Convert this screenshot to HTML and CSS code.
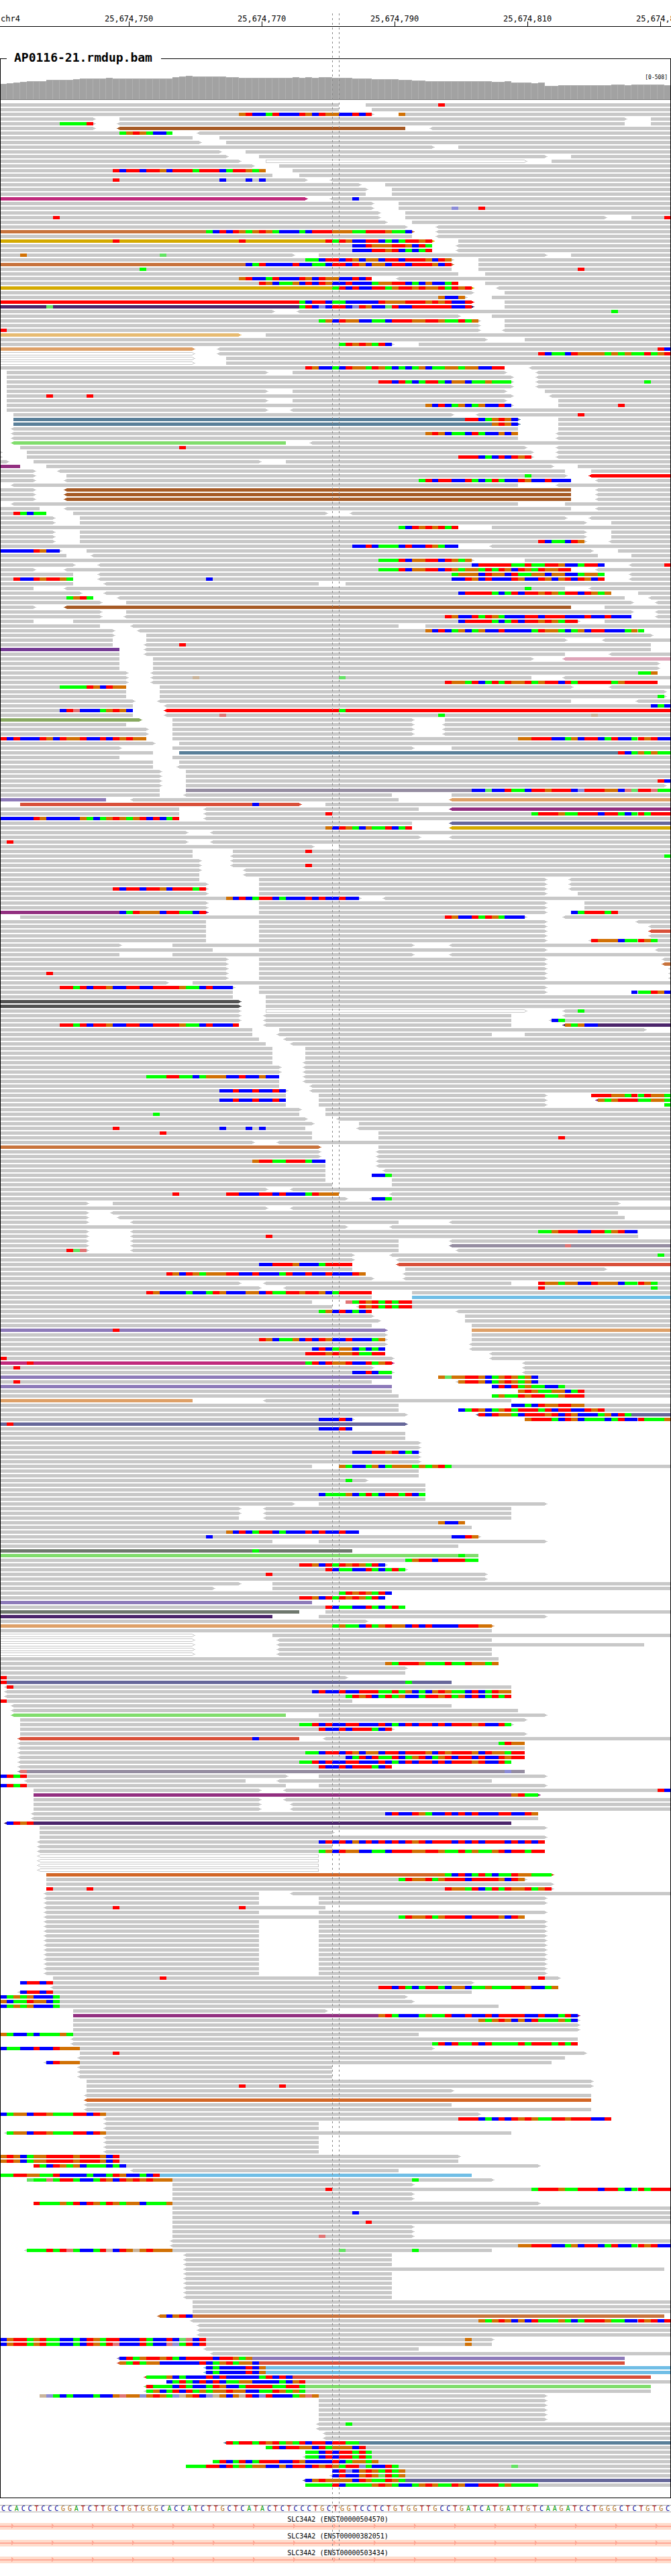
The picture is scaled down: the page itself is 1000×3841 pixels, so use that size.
FILE: index.html
```html
<!DOCTYPE html>
<html lang="en">
<head>
<meta charset="utf-8">
<meta name="viewport" content="width=device-width, initial-scale=1">
<title>AP0116-21.rmdup.bam</title>
<link rel="stylesheet" href="styles.css">
</head>
<body>
<main class="browser">
  <svg class="plot ruler" id="ruler" role="img" aria-label="Position on chr4"></svg>

  <section class="track">
    <h1 class="track-title">AP0116-21.rmdup.bam</h1>
    <svg class="plot coverage" id="coverage" role="img" aria-label="Coverage"></svg>
    <svg class="plot reads" id="reads" role="img" aria-label="Aligned reads"></svg>
  </section>

  <div class="sequence" id="sequence"></div>

  <section class="genes">
    <h2 class="gene-name">SLC34A2 (ENST00000504570)</h2>
    <svg class="plot gene-body" aria-hidden="true">
      <defs>
        <pattern id="strand" x="17" y="0" width="60" height="10" patternUnits="userSpaceOnUse">
          <path class="strand-mark" d="M0 1L3 4V6L0 8Z"/>
        </pattern>
      </defs>
      <rect class="intron" y="4" width="100%" height="2"/>
      <rect fill="url(#strand)" width="100%" height="10"/>
    </svg>
    <h2 class="gene-name">SLC34A2 (ENST00000382051)</h2>
    <svg class="plot gene-body" aria-hidden="true">
      <rect class="intron" y="4" width="100%" height="2"/>
      <rect fill="url(#strand)" width="100%" height="10"/>
    </svg>
    <h2 class="gene-name">SLC34A2 (ENST00000503434)</h2>
    <svg class="plot gene-body" aria-hidden="true">
      <rect class="intron" y="4" width="100%" height="2"/>
      <rect fill="url(#strand)" width="100%" height="10"/>
    </svg>
  </section>

  <div class="guide guide-start"></div>
  <div class="guide guide-end"></div>
</main>
<script src="browser.js"></script>
</body>
</html>
```
FILE: styles.css
```css
body {
  margin: 0;
  background: #fff;
  color: #000;
  font-family: "DejaVu Sans Mono", monospace;
}

.browser {
  position: relative;
  padding-bottom: 19px;
  overflow: hidden;
}

.plot {
  display: block;
  width: 100%;
  shape-rendering: crispEdges;
}

.ruler {
  height: 40px;
  margin-bottom: 47px;
  font-size: 12px;
}

.track {
  display: flow-root;
  position: relative;
  padding-bottom: 15px;
}

.track::after {
  content: "";
  position: absolute;
  inset: 0;
  border: 1px solid #000;
  pointer-events: none;
}

.track-title {
  position: relative;
  z-index: 1;
  width: 219px;
  margin: -11px 0 0 10px;
  padding-left: 11px;
  background: #fff;
  font-size: 18px;
  line-height: 20px;
  white-space: nowrap;
}

.coverage {
  height: 53px;
  font-size: 8px;
}

.depth-edge { fill: #b0b0b0; }
.depth { fill: #a2a2a2; }
.baseline { fill: #787878; }

.reads {
  margin-top: 5px;
}

.sequence {
  display: grid;
  grid-template-columns: repeat(101, 1fr);
  margin-top: 10px;
  border: solid #aaa;
  border-width: 1px 0;
  font-size: 10px;
  line-height: 9px;
  text-align: center;
}

.base-A { color: #009900; }
.base-C { color: #000099; }
.base-G { color: #b06a10; }
.base-T { color: #aa0000; }

.genes {
  padding-top: 1px;
}

.gene-name {
  margin: 0;
  padding: 5px 0 0 7px;
  font-size: 10px;
  font-weight: 400;
  line-height: 10px;
  text-align: center;
}

.gene-body {
  height: 10px;
  background: #ffdccc;
}

.intron,
.strand-mark {
  fill: #ffa896;
}

.guide {
  position: absolute;
  z-index: 2;
  top: 20px;
  bottom: 24px;
  width: 1px;
  background: repeating-linear-gradient(#888 0 3px, transparent 3px 7px);
}

.guide-start { left: calc(100% * 50 / 101); }
.guide-end { left: calc(100% * 51 / 101); }
```
FILE: browser.js
```js
const COLUMNS = 101;
const ROW_HEIGHT = 7;
const READ_HEIGHT = 5;
const pct = n => (n * 100 / COLUMNS).toFixed(3) + '%';

/* Bases; lower case marks a low-quality call. */
const BASES = {
  A: '#00ff00', C: '#0000ff', G: '#d17105', T: '#ff0000',
  a: '#64e364', c: '#8c8cd8', g: '#c9b49b', t: '#e07575'
};

/* Colour of the mate's chromosome; plain reads are grey. */
const MATES = {
  br: '#a65a25', mg: '#c02a7c', si: '#c8733c', go: '#d4aa00', rd: '#ff0000',
  dp: '#4b256b', tn: '#e7bb71', or: '#dea067', st: '#597f99', gn: '#80dd6c',
  pu: '#922f80', pk: '#dea4b8', vi: '#743b94', ol: '#88a960', mv: '#958da1',
  lv: '#8d7ab9', ru: '#d9503a', sl: '#66679a', ch: '#525252', sk: '#70bee6',
  gg: '#6e776d', ob: '#d26626'
};

const SEQUENCE = 'CCACCTCCCGGATCTTGCTGTGGGCACCATCTTGCTCATACTCTCCCTGCTGGTCCTCTGTGGTTGCCTGATCATGATTGTCAAGATCCTGGGCTCTGTGC';

/* Bar height and the number of columns that share it. */
const DEPTH = [
  [23, 1], [24, 1], [25, 1], [26, 1], [27, 3], [29, 4], [30, 1], [31, 4], [32, 1],
  [31, 9], [33, 1], [34, 1], [35, 1], [34, 5], [33, 2], [32, 8], [33, 1], [32, 1],
  [33, 1], [32, 1], [33, 2], [32, 3], [31, 3], [30, 4], [29, 2], [28, 2], [27, 10],
  [26, 2], [27, 1], [25, 3], [24, 1], [25, 1], [20, 2], [21, 8], [22, 2], [21, 1],
  [22, 5], [21, 1]
];

/* One line per row: reads as start-end (< or > for the strand tip, :mate),
   mismatches as start column and bases, *n to repeat the row. */
const READS = `
0-51 55-101 66T
0-51 56-101
0-56> 60-101 36GTCCATCCCTGCTGGCCTCT 60G
0-14> 18-94> 98-101
0-14> <18-94 98-101 9AAAAT
0-14> <18-61:br <65-101
0-26 <30-101 18AGTGACCA
0-29 33-101
0-30> 34-101
0-65> 69-101
0-33> 37-101
0-34> 39-82> 86-101
0-36> 40-79>:wh 83-101
0-38> 42-101
0-40 44-101 17TCTTCTTGCTTTATTTCATTGAG
0-41 45-101
0-46> <50-101 17T 33C 37C 39C
0-54> 58-101
0-55> 59-101
0-55 59-101
0-46>:mg <50-101 53C
0-56> 60-101
0-56> 60-101 68c 72T
0-57> 61-101
0-57> 61-91> 95-101 8T 100T
0-58> 62-101
0-61> <66-101
0-62>:si <66-101 31ACTCTGAGTGACCCACTTTGGGAATTTGAAC
0-62 <66-101
0-65>:go 69-101 17T 36T 49TATGCCTTCACATTGT
0-65 <69-101 53CCTGGGTTGCTA
0-65 <69-101 53CCCTTGTCACAT
0-44> 48-82> 86-101 3G 24a
0-68> 72-101 46AACTTCTGCGGCTTCTTTGCTG
0-68>:si 72-101 37CATCCCCTCCAACTTCTGCGGCTTCTTTGCT
0-68 72-101 21A 87T
0-69 73-101
0-56 <60-101 36GTCCATCCCTGCTGGCCTCT
0-69 73-101 39TGCAAGCTCTGCCTCCCAGGTTCACGCCAT
0-71>:go <75-101 50ATCTCCTTAGTTGTGGTATGT
0-71> 76-101
0-70> 74-101 66GCCG
0-71>:rd 76-101 45ACTTCAACCCCCTGGGTTTGTGTCCT
0-71>:dp 76-101 7a 45ATCcCTTCcTGCCaTCCTTTTTTCCT
0-41> <45-101 92A
0-69> 74-101
0-72> 76-101 48AGCTGGCCAACTTTGGTTGAATAG
0-72> 76-101
0-72> <76-101 0T
0-36>:tn 40-101
0-73> 79-101
0-59> 63-101 51ATGTGATC
0-29>:or <33-101 99TC
0-29>:wh <33-101 81TCAACTGGGGAGAGAATAGT
0-29>:wh 34-101 *2
0-76 <80-101 46TGCCACTGGATGACACAGCAAGGAGGCCTT
1-40> 44-76> <81-101
1-77> <81-101
1-77> <81-101 57TTCTACATTACGGCAAGAAA 97A
1-77> <81-101
1-40> 44-76> 82-101
1-77> <83-101 7T 13T
1-40> 44-76> 84-101
1-77> 84-101 64GCTCAGCAGCCTC 93T
1-40> <44-101
2-68> <72-101 87T
2-78>:st 84-101 70TTCAGTGC
2-78>:st 84-101 74GTGC
<2-78 84-101
<2-78 <84-101 64GTGCAACTACCGCG
<2-78 <84-101
<2-43:gn <47-101
3-79> <84-101 27T
0-0> 4-80> <84-101
0-0> 4-80> <84-101 69TTTCACTCTGT
0-1> 5-39> 43-101
0-3:pu 7-83> 87-101
0-5> <9-85 89-101
0-5> 10-85> <89-101:rd 79A
0-5> <10-86 <90-101 63ATCTTCCTACATACCTGCCTCCC
<2-78 <84-101
0-5> <10-86:br <90-101 *3
<2-78 85-101
0-6 <10-86 <90-101
0-7 11-49> <53-101 2TACAA
0-8> 12-85> <89-101
0-8> 12-88> 92-101
0-69 74-101 60ACTGTGTAT
0-8> 12-88> 92-101 *2
0-8> 12-88> <92-101 81TCAACTG
0-69 <74-101 53CCTCAAACTCCTGACC
0-9> 13-89> 93-101 0CCCCCTGCC
0-10 <14-90 95-101
0-71> 79-101 57AAATCGGTTCTGAG
0-11> <15-91 <95-101 71CTTTTTAATAATTGCCATTC 100T
0-5> <10-86 <90-101 57AAATCGGTTCTGAGGATATGCTGATGGTT
0-11 <15-91 <95-101 68AGGGCTGGCTAAGGCGGCCAGGA
0-11 <15-91 <95-101 2TCCTGTTGA 31C 68CCTGCTCCCTGCCTGCGTCTGCT
0-11 <16-48 52-101
0-5 <10-85 <89-101 79A
0-12> <16-92 96-101 69CTTTTACATCTTGTGATTCTGAG
0-14 <18-94 <98-101 10AGTA
0-15> 19-95> <99-101
0-5> <10-86:br 91-101
0-15> 19-95> <99-101
0-15> <19-95 <99-101 67TGCCTATGACCCTTCTTTCCCTCCTCCC
0-5 11-87> 91-101 69CTTTTACATCTTGTGATT
0-15 <20-60 64-101
0-17> <21-97 64GCTCAGCAGCCTCCCCATGGACAGCTTCCCAGA
0-17> 22-98>
0-17 22-85> <91-101
0-17 <22-98 27T
0-18:vi <22-98
0-18 <22-85 <92-101
0-18 23-80> <85-101:pk
0-18 23-99> *2
0-19> <23-99 96AAG
0-19> <23-80 <85-101 29g 51a
0-19> <23-99 67TGGATCATATGGTAGTTCTATTTTTAGTTTTT
0-19 24-86> <92-101 9AAAATGCTGG
0-19 24-100>
0-19 24-100> 99A
0-20> <24-86 <96-101
0-20 <25-101 98CAC
0-20 <25-101:rd 51A 9CTtCCCAGTGC
0-20 <25-101 33t 66A 89g
0-21>:ol 26-62> 67-101
0-19 26-62> <67-101
0-22> 26-62> <67-101 *2
0-22 26-101 0TCTCCCTGCTGGTCCTCTGTGG 78GGTTTCCAGCTTCATCCATGTCC
0-23> 27-101
0-18> 26-62> 68-101
0-23 27-101:st 93TCAGAGAA
0-18 26-101
0-23 27-101
0-23 <27-101
0-24> 28-101 *2
0-24> 28-101 99TC
0-24> 28-100>
0-24 28-101:mv 71CCaCCTAACTTGTTTCcTTTGGCtaTTtAA
0-24 <28-59 68-101
0-16:lv <20-60 <68-101:or
3-45>:ru 49-101 38C
0-27 <31-63 <68-101:pu
0-27 <31-101 49T 80ATTTGAATTTCTTACATATTT
0-27 <31-101 0CCCCCTGCCCCCGACAGTGAGTCTCAT
0-62 <68-101:sl
0-62 <68-101:go 49GCTGACGAATCAT
0-28> <32-101
0-63> <68-101
0-28> <32-101 1T
0-47> 51-101
0-29 35-101 46T
0-29 <35-101 100A
0-30> <35-101
0-30> <35-101 46T
0-30> <37-101
0-30 <37-101
0-30 39-82> <86-101
0-31> 39-82> <86-101
0-31> 39-82> <86-101 17TCTTCTTGCTTTAT
0-31> 39-82> 87-101
0-54> <58-101 34GCTCATTCACCCTCTCCTCC
0-31> 39-82> 88-101 *2
0-31>:pu 39-82> 86-101 18CATGGGCTTAACT 86CATTTAT
3-79> <85-101 67TGCCTATGACCC
0-31 39-82> <96-101
0-31 39-82> <98-101
0-31 39-82> <98-101:ru
0-31 39-82> <98-101
0-31 39-82> <89-101 89TGGGCAATGA
0-18> 26-62> <68-101
0-32 39-82> <99-101
0-18 26-62> <68-101
0-34> 39-82> <100-101
0-34> 39-82> <100-101:si
0-34> 39-82> <101-101
0-34> 39-82> <101-101 7T
0-34> 39-82> <101-101
0-25> 29-101
0-35> 39-82> 9TTATCTTGCCTTCCTTTTGAACTCCC
0-35 39-82> 95CAATGC
0-35 40-101
0-36>:ch 40-101 *2
0-36> 40-79>:wh <85-101 87A
0-36> <40-77 <85-101
0-36> <40-77 <83-101 83CA
0-36 <40-77 <85-101:dp 85GAGCC 9TTATCTTGCCTTCCTTTTGAACTCCCT
0-38 42-97>
0-38 <42-74 79-101
0-39 <43-101
0-40 <44-101
0-41 46-101 *3
0-41 <46-101
0-42> <46-101 *2
0-42 <46-101 22AAATTAACAGGGCCTCCGCC
0-42 <46-101
0-42 <47-101
0-43> <47-101 33CCTCCTCCTC
0-43 48-82> 89-101 89TTTGGATATGGA
0-43 48-82> <90-101:pu 90GAGTTTAAGGA 33CCTCCTCCTC
0-43 48-82> 100-101 100A
0-45> 49-101
0-45 49-101 23A
0-46> <51-101
0-47> 54-101
0-46 <54-101 17T 33C 37C 39C
0-47 57-101 24T
0-47 57-101 84T
0-38> <42-101
0-48>:si 57-101
0-48> <57-101 *2
0-49 <57-101 38GTTAATTTACC
0-49 <57-101
0-49 <58-101
0-49 56-101 56CCA
0-49 59-101
0-50 59-101
0-40> <44-101
0-51 <59-101 26T 34TTCCCTTCTCCCATGGG
0-52> <56-101 56CCA
0-13> 17-93>
0-40> <44-101
0-13> <17-93
0-13> <18-94
0-13> <20-60 <68-101
0-52> <59-101
0-13> <20-96 81AAGTTTCCTTAGTCC
0-13> <20-96 40T
0-13> <20-60 <68-101
0-13> <20-60 <68-101:mv 85t
0-13> <20-60 <69-101 10Tat
0-53> <59-101 99A
0-53> <60-101
0-53 <60-101:ru 39CCTTTGCCCATTTT
0-53 61-91>
0-55 <61-101 25TGCTGAGGGTTCCTCCCATCCTCCTCCCTG
0-56> <61-101
0-36> <40-77 81-101 81TGGAGGCCTGGGCAATGA
0-39> <43-101 81T 98A
0-56 62-101 22TGCCCCACCATGCCCGGCTAATTGTTGCATTTTT
0-56 62-101:sk
0-47 52-101 52tATGTATATT
0-50 <54-101 54TGTATATT
0-56 <69-101 48AGCTCACT
0-56> 70-101
0-57> 70-101
0-56 71-101
0-58>:lv 71-101:or 17T
0-58> 71-101
0-58> 71-101 39TGCAAGCTCTGCCTCCCAG
0-58> <71-101
0-58 <71-101 47CTCAGGCACAC
0-58 <74-101 46TTTGTGGTAATT
0-59> <74-101 0T
0-59>:mg <79-101 4T 46ATCTGGTCCTAGT
0-56> <79-101 2T
0-59> <79-101 53CCTCAA
0-59:lv 66-101 66GaGGTTGCAGTGAGC
0-56 <69-101 2T 69GTTGCAGTGAGC
0-59:lv 74-101 74CTCTAGAACCA
0-59 78-101 78GTGAAGGCAT
0-60 74-101 74AGAATGTTAAGTTT
0-29:or <40-77
0-60 77-101 77CCACTGGTTGG
0-60 69-101 69CATGCAGTATTTATCTTCCTGT
0-61> <72-101:sl 72TCTGGACTTTGTCTGCCCAGCTA
0-53> 79-101 48CCCTC 79GTTTACTGCAAACATCCTAAAG
0-61>:sl 1T
0-53 48CCCTC
0-61 *2
0-63> *2
0-63> 53CCCTTGTCAC
0-63> *2
0-47 51-101 51GACCAGCAGGGAGAGTA
0-63 *2
0-55> 52A
0-64 *2
0-64 48CAAAGCATACTTATCA
0-64
0-44> 48-82>
0-36> <40-77 *2
0-36 <40-77
0-70 66GCCG
0-71
0-54 34GCTCATTCACCCTCTCCTCC
0-72> 31C 68CCTG
0-41 48-82>
0-69
0-53:gg 38A
0-72:gn 69A
0-72 61AGTTCTTTTAA
0-58> 45TTGCTATGTGATC
0-61> 49TCAACCTACATA
0-73> 40T
0-73>
0-36> 41-101
0-32> 41-101
0-59 51ATGTGATC
0-58 45TTGCTATGTGATC
0-47:lv
0-61 49TCAACCTACATA
0-45:gg 49-101
0-41:dp 48-82>
0-55>
0-74>:or 50AGAACTAGTGGCTCTCCCCTTTGG
0-74
0-29>:wh 41-101
0-29>:wh <42-74
0-29>:wh <42-97
0-29>:wh <42-74 *2
0-75
0-75 58GATTTGAAATAATGGAG
0-61>
0-61
0-52> 0T
0-68:sl 0T 61A
<1-77 1T
<1-77 47CTCCTCCTTTAATAGCACGTGAACTCATGG
<1-77 52ATGTCATAGCCATTGTAGCTCATAT
0-53 0T
<2-68
<2-78
<2-43:gn 48-82>
3-79>
3-77> 45AATCTCCTTCCCTCACTCTTCTCTTTGTCCTA
3-59> 48TCCTCTTTACT
3-79>
<3-45:ru <49-101 38C
<3-79 75ATGG
<3-79
<3-79 46AACTTCTGCGGCTTCTTTGCTGTTTGCTGGATT
<3-79 52CATCTAATCAGTCAGTCTTCTCCTGTT
<3-77 45AATCTCCTTCCCTCACTCTTCTCTTTGTCCTA
<3-59 48TCCTCTTTACT
<3-79:mv 3t 76c
0-43> 48-82> 0CTAT
<4-37 <42-74
0-43 48-82> 0CTAT
5-39> <43-101 99TC
5-81>:pu 77GTAA
5-39> <43-101
5-39> <44-101 *2
<5-81 58CTCCTGACCTCTCTCCCTTCCTG
<5-81
<1-77:dp 1CTGT
6-82>
6-50>
6-82>
<6-82 48CTCTCGCTCTCTCTGTCTTTCTCTCTTTCTCTCT
<6-50
<6-82 48AGCTGGCCAACTTTGGTTGAATAGAAGTCTTATT
<6-48:wh *4
7-83>:ob 66GACTCATACAATGGAAA
7-79> 60ATGGTAGTTTCTTTTGCTG
7-83>
7-83> 7T 13T 67TGGATCATATGGTAGT
<7-39 <44-101
<7-39 48-82> *2
<7-49 17T 36T
<7-39 48-82>
<7-79 60ATGGTAGTTTCTTTTGCTG
<7-39 48-82> *12
8-84> 24T 81T
3-71> 3CTTCT
<8-84 57TTCTACATTACGGCAAGAAATTGCCAG
<3-71 3CTTCT
0-61> 0CAGAGCCCA
0-62> 0GCAATGGCA
0-75 0CAGAGCCCA
11-49>
11-87>:pu 57GTACCCAGAATCCTCCTCTTTTCCTCCATC
11-87> 72GAGTGCGCTAAAGAC
11-87> *2
0-63 0GACCACAAAGA
<11-87
<11-87 65ATCTAATCTAAAATATTTATAT
0-65> 0CAACCTCCTGGG
12-88> 17T
<12-85
<7-83 7CTGGG
<12-50 *3
13-89>
13-89> 36T 42T
13-68>
<13-89
<13-89:ob
<13-68
<13-89
0-72> 0CAGGCTTGAAATTCTG
<16-92 69TTTCACTCTGTGAATTGTTTCCT
<16-48 *2
<1-77 1AGGCTTGAAATTCTG
<16-48 *4
0-69> 0GTGCAGGTTTTGTTTGCT
0-69 0GTGCAGGTTTTGTTTGCT
5-81> 5TACTGAGCAAACAC
<20-60
0-71:sk 0AATTGGAATCCCCACCATGCCACT
4-74> 62A 4aAAtATTACCATGCTGTGTGGG
26-62>
26-101 49T 80ATTTGAATTTCTTACATATTT
26-62> *2
5-81> 5TAAAGATCTGATGAGGCAAAG
26-101
26-101 53C
26-101
26-101 55T
26-62> *2
26-62> 48t
<26-101
<26-101 78GGTTTCCAGCTTCATCCATGTCC
<4-74 51a 62A 4AAATATtACCATgCTGgGTGGG
<28-59 *3
<28-100
<28-59 *6
29-101 *3
<24-100:si 24GCGTC
<29-101 72GAGTGCGCTAAAGACATTTGAACCTGTCT
<30-101 *3
0-74> 70G 0CGTTAGTAACCACTGATTCCCTACCTCatCT
0-74 70G 0CGTTAGTAACCACTGATtCCCTACCtcATCT
<31-63
<32-101
<18-94:lv 18CTAGTTGTACTTTTCTTGAG
<18-94:ru 18GATAGGCCCCCCTCAGTAGGC
<31-101:sk 31CACCCCTCG *2
<22-98:ru 22AAAGCACCCTCTCCCCCATCTC
25-101 25CATACTCTCAAGGCCCCACGT
<22-98:gn 22TAAACTACCATGCCATTTTAATTA
<22-98 22AGCATCTAGAGGTGGCCAATGAGA
6-82> 6gcACACCCACCGtGGcGTGAcgGTCcgGCGgTCcTCCCAGtG
48-82> *5
<48-101 52A
<48-101
<49-101 *2
<34-101:st 34TATTATGTAGATCTTCTTAA
40-101 40ATCTTGGCTAGGGCT
46-101 46AACTCTTATA
<46-101 46AACTCTTATA
32-101 32ATCATCATTTCCTGCCCCTCAGGAG
28-101 77a 28AAATTCTAGAGGCCGCTTCTGTGATTcACCTA
50-101 50CTcCGTGATAG
<50-101 50CTCCGTGaTAG
<46-101:sl 46CGTGGGGCTGAATGA
46-101 46AAAATCAAAAGTGACCAGTGAATGCCTTTAGAAAA
`;

function rect(x, y, w, h, attrs) {
  return `<rect x="${x}" y="${y}" width="${w}" height="${h}" ${attrs}/>`;
}

/* Ruler: a tick in the middle of every twentieth base. */
function drawRuler(svg) {
  let out = '<text x="1" y="32">chr4</text>' + rect(0, 39, '100%', 1, '');
  ['25,674,750', '25,674,770', '25,674,790', '25,674,810', '25,674,830'].forEach((label, i) => {
    const x = pct(19.4 + i * 20);
    out += `<text x="${x}" y="32" text-anchor="middle">${label}</text>` + rect(x, 32, 1, 7, '');
  });
  svg.innerHTML = out;
}

function drawCoverage(svg) {
  const floor = 52;
  let out = '';
  let column = 0;
  for (const [h, count] of DEPTH) {
    out += rect(pct(column), floor - h, pct(count), h, 'class="depth-edge"');
    out += rect(pct(column), floor - h + 1, pct(count), h - 1, 'class="depth"');
    for (let i = 1; i <= count; i++) {
      out += rect(pct(column + i), floor - h, 1, h, 'class="depth-edge" transform="translate(-1)"');
    }
    column += count;
  }
  out += rect(0, floor, '100%', 1, 'class="baseline"');
  out += '<text x="100%" y="22" dx="-5" text-anchor="end">[0-508]</text>';
  svg.innerHTML = out;
}

/* A read whose mate maps ambiguously is hollow, open at its pointed end. */
function drawHollow(start, width, left, y) {
  const cap = left
    ? '<svg x="100%" overflow="visible"><rect x="-1" width="1" height="5" fill="#c8c8c8"/></svg>'
    : rect(0, 0, 1, READ_HEIGHT, 'fill="#c8c8c8"');
  return `<svg x="${pct(start)}" y="${y}" width="${pct(width)}" height="${READ_HEIGHT}">` +
    rect(0, 0, '100%', READ_HEIGHT, 'fill="#c8c8c8"') +
    rect(0, 1, '100%', 3, 'fill="#fff"') + cap + '</svg>';
}

function drawRead(token, y) {
  const [, left, from, to, right, mate] = token.match(/^(<?)(\d+)-(\d+)(>?):?(\w*)$/);
  const start = Number(from);
  const end = Number(to);
  const hollow = mate === 'wh';
  const colour = MATES[mate] || '#c8c8c8';
  let out = '';
  if (hollow) {
    out += drawHollow(start, end - start, left, y);
  } else if (end > start) {
    out += rect(pct(start), y, pct(end - start), READ_HEIGHT, `fill="${colour}"`);
  }
  const tip = hollow ? 'open' : 'tip';
  if (left) out += `<use href="#${tip}-left" x="${pct(start)}" y="${y}" fill="${colour}"/>`;
  if (right) out += `<use href="#${tip}-right" x="${pct(end)}" y="${y}" fill="${colour}"/>`;
  return out;
}

function drawBases(token, y) {
  const [, start, bases] = token.match(/^(\d+)(\D+)$/);
  let column = Number(start);
  let out = '';
  for (const run of bases.match(/(.)\1*/g)) {
    out += rect(pct(column), y, pct(run.length), READ_HEIGHT, `fill="${BASES[run[0]]}"`);
    column += run.length;
  }
  return out;
}

function drawReads(svg) {
  let out = '<defs>' +
    '<path id="tip-right" d="M0 1h2v1h2v1h-2v1h-2z"/>' +
    '<path id="tip-left" d="M0 1h-2v1h-2v1h2v1h2z"/>' +
    '<path id="open-right" d="M0 1h2v1h-2zM2 2h2v1h-2zM0 3h2v1h-2z"/>' +
    '<path id="open-left" d="M0 1h-2v1h2zM-2 2h-2v1h2zM0 3h-2v1h2z"/>' +
    '</defs>';
  let row = 0;
  for (const line of READS.trim().split('\n')) {
    const tokens = line.split(' ');
    let times = 1;
    if (tokens[tokens.length - 1][0] === '*') times = Number(tokens.pop().slice(1));
    for (; times > 0; times--, row++) {
      for (const token of tokens) {
        out += token.includes('-') ? drawRead(token, row * ROW_HEIGHT) : drawBases(token, row * ROW_HEIGHT);
      }
    }
  }
  svg.innerHTML = out;
  svg.style.height = row * ROW_HEIGHT + 'px';
}

drawRuler(document.getElementById('ruler'));
drawCoverage(document.getElementById('coverage'));
drawReads(document.getElementById('reads'));
document.getElementById('sequence').innerHTML =
  [...SEQUENCE].map(base => `<span class="base-${base}">${base}</span>`).join('');
```
